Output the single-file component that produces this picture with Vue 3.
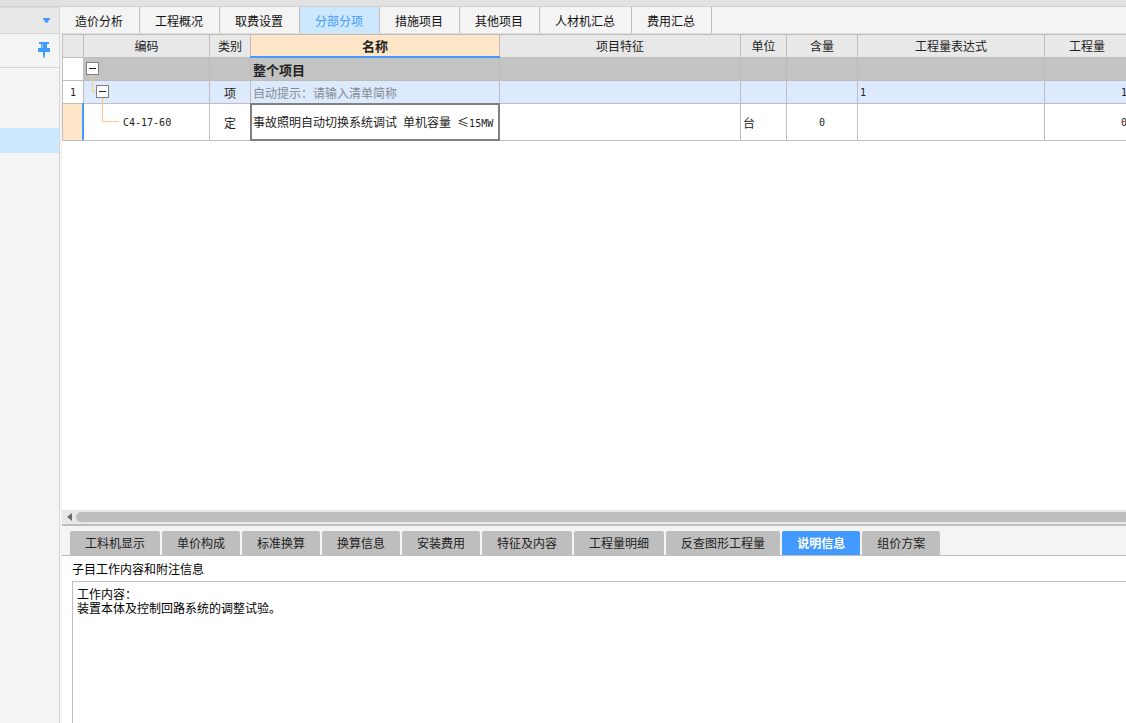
<script setup>
import { ref } from 'vue'

const topTabs = ['造价分析', '工程概况', '取费设置', '分部分项', '措施项目', '其他项目', '人材机汇总', '费用汇总']
const activeTop = ref('分部分项')

const detailTabs = ['工料机显示', '单价构成', '标准换算', '换算信息', '安装费用', '特征及内容', '工程量明细', '反查图形工程量', '说明信息', '组价方案']
const activeDetail = ref('说明信息')

const notes = ref('工作内容：\n装置本体及控制回路系统的调整试验。')
</script>

<template>
  <div class="app">
    <div class="strip"></div>
    <div class="body">
      <aside class="side">
        <button class="side-drop" type="button" aria-label="展开">
          <svg width="7" height="5" viewBox="0 0 7 5"><path d="M0 0H7V1L4 5H3L0 1Z" fill="#4299ff" /></svg>
        </button>
        <div class="side-pin">
          <button type="button" aria-label="固定">
            <svg width="12" height="16" viewBox="0 0 12 16">
              <path d="M1 0H11V2H9V6H12V10H7V13L6.500 16H5.500L5 13V10H0V6H3V2H1Z" fill="#4299ff" />
              <path d="M4.500 2V6" stroke="#9cc9ff" />
            </svg>
          </button>
        </div>
        <div class="side-selected"></div>
      </aside>

      <main class="main">
        <nav class="top-tabs">
          <button
            v-for="t in topTabs"
            :key="t"
            type="button"
            :class="{ active: t === activeTop }"
            @click="activeTop = t"
          >{{ t }}</button>
        </nav>

        <section class="sheet">
          <table>
            <colgroup>
              <col class="c-no" /><col class="c-code" /><col class="c-kind" /><col class="c-name" /><col />
              <col class="c-unit" /><col class="c-content" /><col class="c-expr" /><col class="c-qty" />
            </colgroup>
            <thead>
              <tr>
                <th></th>
                <th>编码</th>
                <th>类别</th>
                <th class="current">名称</th>
                <th>项目特征</th>
                <th>单位</th>
                <th>含量</th>
                <th>工程量表达式</th>
                <th>工程量</th>
              </tr>
            </thead>
            <tbody>
              <tr class="total">
                <td class="no"></td>
                <td class="tree">
                  <svg class="lines" width="36" height="64" viewBox="0 0 36 64">
                    <path d="M8.500 17V33.500H12M18.500 40V63.500H35" fill="none" stroke="#ffc880" />
                  </svg>
                  <button class="toggle" type="button" aria-label="折叠"></button>
                </td>
                <td></td>
                <td class="title">整个项目</td>
                <td></td><td></td><td></td><td></td><td></td>
              </tr>
              <tr class="item">
                <td class="no mono">1</td>
                <td class="tree nested"><button class="toggle" type="button" aria-label="折叠"></button></td>
                <td class="center">项</td>
                <td class="hint">自动提示：请输入清单简称</td>
                <td></td><td></td><td></td>
                <td class="mono">1</td>
                <td class="mono right">1</td>
              </tr>
              <tr class="quota">
                <td class="no picked"></td>
                <td class="mono leaf">C4-17-60</td>
                <td class="center">定</td>
                <td class="editing">事故照明自动切换系统调试<span class="mono">&nbsp;</span>单机容量<span class="mono">&nbsp;</span>≤<span class="mono">15MW</span></td>
                <td></td>
                <td>台</td>
                <td class="mono center">0</td>
                <td></td>
                <td class="mono right">0</td>
              </tr>
            </tbody>
          </table>
        </section>

        <div class="scroll">
          <svg width="5" height="8" viewBox="0 0 5 8"><path d="M5 0V8L0 4Z" fill="#6b6b78" /></svg>
          <div class="thumb"></div>
        </div>

        <section class="detail">
          <nav class="detail-tabs">
            <button
              v-for="t in detailTabs"
              :key="t"
              type="button"
              :class="{ active: t === activeDetail }"
              @click="activeDetail = t"
            >{{ t }}</button>
          </nav>
          <label for="notes">子目工作内容和附注信息</label>
          <textarea id="notes" v-model="notes" spellcheck="false"></textarea>
        </section>
      </main>
    </div>
  </div>
</template>

<style>
body {
  margin: 0;
}
</style>

<style scoped>
.app {
  display: flex;
  flex-direction: column;
  height: 100vh;
  overflow: hidden;
  background: #fff;
  color: #222;
  font-family: "Noto Sans CJK SC", sans-serif;
  font-size: 12px;
}
.app * {
  box-sizing: border-box;
}
button {
  margin: 0;
  padding: 0;
  border: 0;
  background: none;
  color: inherit;
  font: inherit;
}
svg {
  display: block;
}
.strip {
  flex: none;
  height: 7px;
  background: #e1e1e1;
  border-bottom: 1px solid #d0d0d0;
}
.body {
  flex: 1;
  display: flex;
  min-height: 0;
}

.side {
  flex: none;
  width: 60px;
  background: #f4f4f4;
  border-right: 1px solid #d6d6d6;
}
.side-drop {
  display: flex;
  align-items: center;
  justify-content: flex-end;
  width: 100%;
  height: 27px;
  padding-right: 9px;
  background: #e8e8e8;
  border-top: 1px solid #dadada;
  border-bottom: 1px solid #d6d6d6;
}
.side-pin {
  display: flex;
  align-items: flex-start;
  justify-content: flex-end;
  height: 34px;
  padding: 8px 9px 0 0;
  border-bottom: 1px solid #d6d6d6;
}
.side-selected {
  height: 25px;
  margin-top: 60px;
  background: #cce8ff;
}

.main {
  flex: 1;
  display: flex;
  flex-direction: column;
  min-width: 0;
  border-left: 2px solid #f4f4f4;
}
.top-tabs {
  flex: none;
  display: flex;
  height: 27px;
  margin-left: -2px;
  background: #f4f4f4;
  border-bottom: 1px solid #dcdcdc;
}
.top-tabs button {
  padding: 2px 16px 0 15px;
  border-right: 1px solid #bebebe;
  color: #111;
  white-space: nowrap;
  line-height: 24px;
}
.top-tabs .active {
  background: #cce8ff;
  color: #4299ff;
}

.sheet {
  flex: 1;
  min-height: 0;
  overflow: hidden;
}
table {
  width: calc(100% + 4px);
  table-layout: fixed;
  border-collapse: separate;
  border-spacing: 0;
  border-top: 1px solid #bebebe;
  border-left: 1px solid #bebebe;
}
.c-no { width: 21px; }
.c-code { width: 126px; }
.c-kind { width: 41px; }
.c-name { width: 249px; }
.c-unit { width: 46px; }
.c-content { width: 71px; }
.c-expr { width: 187px; }
.c-qty { width: 85px; }
th,
td {
  height: 23px;
  padding: 2px 2px 0;
  border-right: 1px solid #bebebe;
  border-bottom: 1px solid #bebebe;
  line-height: 18px;
  white-space: nowrap;
  text-align: left;
  vertical-align: middle;
}
th {
  padding: 0;
  background: #e8e8e8;
  font-weight: 400;
  text-align: center;
}
th.current {
  position: relative;
  background: #ffe6c8;
  font-size: 13px;
  font-weight: 700;
}
th.current::after {
  content: "";
  position: absolute;
  right: -1px;
  bottom: -1px;
  left: -1px;
  height: 2px;
  background: #4299ff;
}
.total td {
  background: #c3c3c3;
  border-color: #bbb;
}
.item td {
  background: #dde9fc;
}
.quota td {
  height: 37px;
}
tbody .no {
  padding: 2px 0 0;
  background: #fff;
  border-color: #bebebe;
  text-align: center;
}
.quota .picked {
  position: relative;
  background: #ffe6c8;
}
.picked::after {
  content: "";
  position: absolute;
  top: -1px;
  right: -1px;
  bottom: 0;
  width: 2px;
  background: #4299ff;
}
.mono {
  font-family: "DejaVu Sans Mono", monospace;
  font-size: 10px;
}
.center {
  text-align: center;
}
td.right {
  text-align: right;
}
.title {
  font-size: 13px;
  font-weight: 700;
}
.hint {
  color: #858b95;
}
td.tree {
  position: relative;
  padding: 0 2px 1px;
}
td.nested {
  padding-left: 12px;
}
td.leaf {
  padding-left: 39px;
}
.lines {
  position: absolute;
  z-index: 1;
  top: 0;
  left: 0;
  pointer-events: none;
}
.toggle {
  display: flex;
  align-items: center;
  position: relative;
  z-index: 2;
  width: 13px;
  height: 13px;
  padding: 0 2px;
  border: 1px solid #808080;
  background: #fff;
}
.toggle::before {
  content: "";
  width: 100%;
  height: 1px;
  background: #222;
}
.editing {
  position: relative;
}
.editing::after {
  content: "";
  position: absolute;
  inset: -1px;
  border: 2px solid #808080;
}

.scroll {
  flex: none;
  display: flex;
  align-items: center;
  gap: 4px;
  height: 16px;
  padding-left: 5px;
  background: #e8e8e8;
  border-bottom: 2px solid #bebebe;
}
.thumb {
  flex: 1;
  height: 10px;
  border-radius: 5px 0 0 5px;
  background: #bebebe;
}

.detail {
  flex: none;
  display: flex;
  flex-direction: column;
}
.detail-tabs {
  display: flex;
  gap: 2px;
  height: 30px;
  padding: 5px 0 0 8px;
  background: #f4f4f4;
  border-bottom: 1px solid #bebebe;
}
.detail-tabs button {
  padding: 0 15px;
  border-radius: 2px 2px 0 0;
  background: #bebebe;
  white-space: nowrap;
  line-height: 24px;
}
.detail-tabs .active {
  background: #4299ff;
  color: #fff;
  font-weight: 700;
}
.detail label {
  padding: 4px 10px 3px;
  color: #000;
  line-height: 18px;
}
textarea {
  height: 142px;
  margin: 0 0 0 10px;
  padding: 5px 4px;
  border: 1px solid #bebebe;
  border-width: 1px 0 0 1px;
  outline: 0;
  resize: none;
  background: #fff;
  color: #000;
  font: 12px/14px "Noto Sans CJK SC", sans-serif;
}
</style>
